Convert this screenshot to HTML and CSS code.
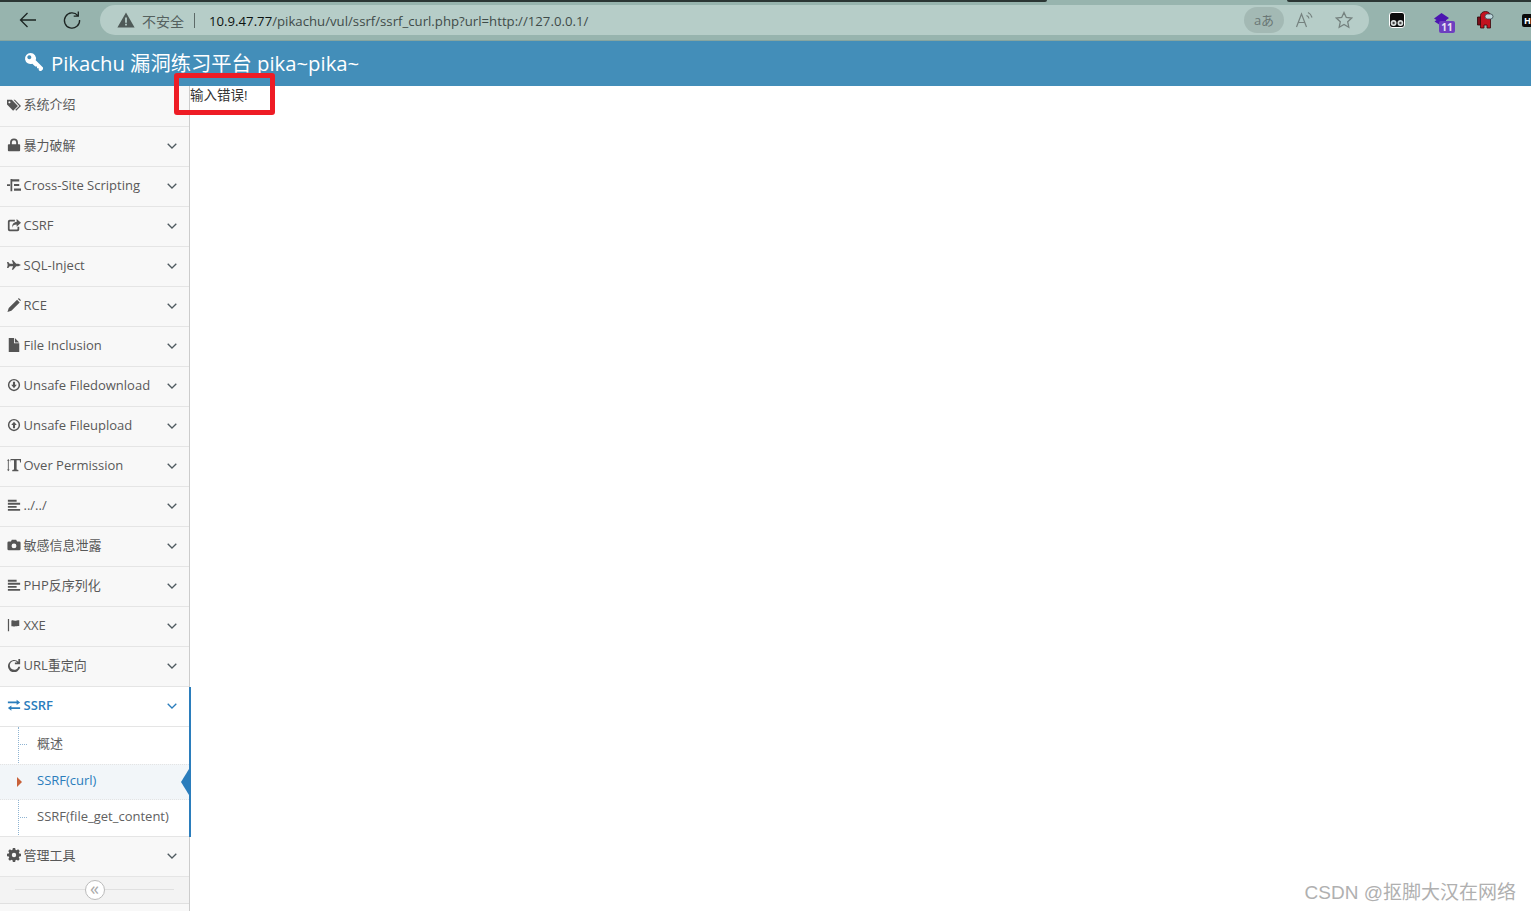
FILE: index.html
```html
<!DOCTYPE html>
<html lang="zh">
<head>
<meta charset="utf-8">
<title>Pikachu</title>
<link rel="stylesheet" href="styles.css">
</head>
<body>
<div class="chrome">
  <div class="tabstrip"><span class="strip-a"></span><span class="strip-b"></span></div>
  <div class="toolbar">
    <svg class="tb-back" width="20" height="20" viewBox="0 0 20 20"><path d="M18 10H2.500M9.500 3l-7 7 7 7" fill="none" stroke="#1c2422" stroke-width="1.300"/></svg>
    <svg class="tb-reload" width="20" height="20" viewBox="0 0 20 20"><path d="M15.800 5.600A7.600 7.600 0 1 0 17.600 10M16.300 1.500v4.600h-4.600" fill="none" stroke="#1c2422" stroke-width="1.300"/></svg>
    <div class="address">
      <svg class="warn" width="18" height="16" viewBox="0 0 18 16"><path fill-rule="evenodd" d="M9 .5l8.600 15H.4zM8.100 5.500v5.200h1.800V5.500zM8.100 11.800v1.800h1.800v-1.800z" fill="#4f5a58"/></svg>
      <span class="unsafe">不安全</span>
      <span class="sep"></span>
      <span class="url"><b>10.9.47.77</b>/pikachu/vul/ssrf/ssrf_curl.php?url=http://127.0.0.1/</span>
      <span class="translate">aあ</span>
      <svg class="read" width="20" height="18" viewBox="0 0 20 18"><path d="M1.500 16L6.500 3l5 13M3.200 11.500h6.600M11.500 4.500a4 4 0 0 1 2.500 3M13 1.500a7.500 7.500 0 0 1 4 5" fill="none" stroke="#75827f" stroke-width="1.200"/></svg>
      <svg class="star" width="18" height="18" viewBox="0 0 18 18"><path d="M9 1.500l2.300 5 5.400.6-4 3.700 1.100 5.400L9 13.500l-4.800 2.700 1.100-5.400-4-3.700 5.400-.6z" fill="none" stroke="#75827f" stroke-width="1.300"/></svg>
    </div>
    <svg class="ext ext-mask" width="16" height="16" viewBox="0 0 16 16"><rect x=".5" y=".5" width="15" height="15" rx="2.500" fill="#0c0c0c" stroke="#fff"/><circle cx="4.600" cy="11" r="2.900" fill="#d9dedd"/><circle cx="11.400" cy="11" r="2.900" fill="#d9dedd"/><circle cx="4.600" cy="11" r="1.200" fill="#444"/><circle cx="11.400" cy="11" r="1.200" fill="#444"/></svg>
    <div class="ext-cap">
      <svg width="17" height="15" viewBox="0 0 17 15"><path d="M8.500 0l7.500 5-3 2.200V10l-4.500 3-7-4.500L3.500 7 1 5.500z" fill="#4b14b0"/></svg>
      <span class="badge">11</span>
    </div>
    <svg class="ext ext-red" width="17" height="18" viewBox="0 0 17 18"><path d="M.5 6h3v8h-3z" fill="#7a0f1a" stroke="#2a0508" stroke-width=".8"/><path d="M3.500 4.500a5 4 0 0 1 10 0V17H10v-3H7v3H3.500z" fill="#c3121f" stroke="#3a070b" stroke-width=".8"/><rect x="8" y="3" width="8" height="5" rx="2.500" fill="#bcd6dc" stroke="#3a4a50" stroke-width=".8"/></svg>
    <div class="ext-last">H</div>
  </div>
</div>

<header class="brand">
  <svg width="20" height="20" viewBox="0 0 20 20"><path fill-rule="evenodd" d="M6.500 1a5.500 5.500 0 0 1 5.200 7.300L19 15.600v1.600l-1.800 1.800h-1.500l-1-1v-1.700h-1.700v-1.700h-1.700L8.300 11.700A5.500 5.500 0 1 1 6.500 1zM5.300 3.200a2 2 0 1 0 .01 0z" fill="#fff"/></svg>
  <span>Pikachu 漏洞练习平台 pika~pika~</span>
</header>

<div class="layout">
  <nav class="sidebar">
    <a class="item item-first">
      <svg class="ico" viewBox="0 0 16 16"><path fill-rule="evenodd" d="M0 2h5.500l7 7-5.500 5.500L0 7.500zM2.800 3.700a1.200 1.200 0 1 0 .01 0zM7.500 2h1.500l7 7-5.500 5.500-1-1L14 9z"/></svg>
      <span class="label">系统介绍</span>
    </a>
    <a class="item">
      <svg class="ico" viewBox="0 0 16 16"><path d="M2 7h1.500V5a4.500 4.500 0 0 1 9 0v2H14a1 1 0 0 1 1 1v6a1 1 0 0 1-1 1H2a1 1 0 0 1-1-1V8a1 1 0 0 1 1-1zm3.500 0h5V5a2.500 2.500 0 0 0-5 0z"/></svg>
      <span class="label">暴力破解</span>
      <svg class="chev" viewBox="0 0 10 6"><path d="M.7.700L5 5l4.300-4.300"/></svg>
    </a>
    <a class="item">
      <svg class="ico" viewBox="0 0 16 16"><path d="M0 7h3.500v2H0zM4 1h2v14H4zM6 1.500h8v2.500H6zM8 6.800h6v2.400H8zM8 12h8v2.500H8z"/></svg>
      <span class="label">Cross-Site Scripting</span>
      <svg class="chev" viewBox="0 0 10 6"><path d="M.7.700L5 5l4.300-4.300"/></svg>
    </a>
    <a class="item">
      <svg class="ico" viewBox="0 0 16 16"><path d="M3 2h6v2H3.500A.5.500 0 0 0 3 4.500v8a.5.500 0 0 0 .5.500h8a.5.500 0 0 0 .5-.5V10h2v3a2 2 0 0 1-2 2H3a2 2 0 0 1-2-2V4a2 2 0 0 1 2-2zm8-1l5 4.500L11 10V7.500C8 7.500 6.500 8.500 6 11c-.3-4 1.500-6.500 5-6.500z"/></svg>
      <span class="label">CSRF</span>
      <svg class="chev" viewBox="0 0 10 6"><path d="M.7.700L5 5l4.300-4.300"/></svg>
    </a>
    <a class="item">
      <svg class="ico" viewBox="0 0 16 16"><path d="M0 4.500h1.500l1.500 2h4L5.500 2.500H7l3.500 4H13L16 8l-3 1.500h-2.500l-3.500 4H5.500L7 9.500H3l-1.500 2H0l.8-3.500z"/></svg>
      <span class="label">SQL-Inject</span>
      <svg class="chev" viewBox="0 0 10 6"><path d="M.7.700L5 5l4.300-4.300"/></svg>
    </a>
    <a class="item">
      <svg class="ico" viewBox="0 0 16 16"><path d="M11.500 2l3 3-9.500 9.500L.5 16 2 11.500zM12.500 1l1-1 2.500 2.500-1 1z"/></svg>
      <span class="label">RCE</span>
      <svg class="chev" viewBox="0 0 10 6"><path d="M.7.700L5 5l4.300-4.300"/></svg>
    </a>
    <a class="item">
      <svg class="ico" viewBox="0 0 16 16"><path d="M2 0h6v6h6v10H2zM9 0l5 5H9z"/></svg>
      <span class="label">File Inclusion</span>
      <svg class="chev" viewBox="0 0 10 6"><path d="M.7.700L5 5l4.300-4.300"/></svg>
    </a>
    <a class="item">
      <svg class="ico" viewBox="0 0 16 16"><path fill-rule="evenodd" d="M8 1a7 7 0 1 1 0 14A7 7 0 0 1 8 1zm0 1.700a5.300 5.300 0 1 0 0 10.600A5.300 5.300 0 0 0 8 2.700zM6.800 4.300h2.400v3.500h2L8 11.600 4.800 7.800h2z"/></svg>
      <span class="label">Unsafe Filedownload</span>
      <svg class="chev" viewBox="0 0 10 6"><path d="M.7.700L5 5l4.300-4.300"/></svg>
    </a>
    <a class="item">
      <svg class="ico" viewBox="0 0 16 16"><path fill-rule="evenodd" d="M8 1a7 7 0 1 1 0 14A7 7 0 0 1 8 1zm0 1.700a5.300 5.300 0 1 0 0 10.600A5.300 5.300 0 0 0 8 2.700zM8 4.300l3.200 3.800h-2v3.500H6.800V8.100h-2z"/></svg>
      <span class="label">Unsafe Fileupload</span>
      <svg class="chev" viewBox="0 0 10 6"><path d="M.7.700L5 5l4.300-4.300"/></svg>
    </a>
    <a class="item">
      <svg class="ico" viewBox="0 0 16 16"><path d="M0 3L1.500 1 3 3H2v10h1l-1.500 2L0 13h1V3zM4 1h12v4h-1l-.5-2.500h-3.500V13l2 .7V15H6v-1.300l2-.7V2.500H4.500L4 5z"/></svg>
      <span class="label">Over Permission</span>
      <svg class="chev" viewBox="0 0 10 6"><path d="M.7.700L5 5l4.300-4.300"/></svg>
    </a>
    <a class="item">
      <svg class="ico" viewBox="0 0 16 16"><path d="M1 2h10v2.200H1zM1 5.500h14v2.200H1zM1 9h10v2.200H1zM1 12.500h14v2.200H1z"/></svg>
      <span class="label">../../</span>
      <svg class="chev" viewBox="0 0 10 6"><path d="M.7.700L5 5l4.300-4.300"/></svg>
    </a>
    <a class="item">
      <svg class="ico" viewBox="0 0 16 16"><path fill-rule="evenodd" d="M2 4h2.500L5.500 2h5l1 2H14a1.500 1.500 0 0 1 1.500 1.500v7A1.500 1.500 0 0 1 14 14H2a1.500 1.500 0 0 1-1.500-1.500v-7A1.500 1.500 0 0 1 2 4zm6 2.200a2.800 2.800 0 1 0 0 5.600 2.800 2.800 0 0 0 0-5.600z"/></svg>
      <span class="label">敏感信息泄露</span>
      <svg class="chev" viewBox="0 0 10 6"><path d="M.7.700L5 5l4.300-4.300"/></svg>
    </a>
    <a class="item">
      <svg class="ico" viewBox="0 0 16 16"><path d="M1 2h10v2.200H1zM1 5.500h14v2.200H1zM1 9h10v2.200H1zM1 12.500h14v2.200H1z"/></svg>
      <span class="label">PHP反序列化</span>
      <svg class="chev" viewBox="0 0 10 6"><path d="M.7.700L5 5l4.300-4.300"/></svg>
    </a>
    <a class="item">
      <svg class="ico" viewBox="0 0 16 16"><path d="M1 1h1.400v14H1zM5 3c2-1 3 .5 5 0s3-.5 4-.5V9c-1 0-2 0-4 .5S7 9 5 9.500z"/></svg>
      <span class="label">XXE</span>
      <svg class="chev" viewBox="0 0 10 6"><path d="M.7.700L5 5l4.300-4.300"/></svg>
    </a>
    <a class="item">
      <svg class="ico" viewBox="0 0 16 16"><path d="M13 4.200V1l2 .1v6h-6V5h2.800A5 5 0 1 0 13 10h2.100A7 7 0 1 1 13 4.200z"/></svg>
      <span class="label">URL重定向</span>
      <svg class="chev" viewBox="0 0 10 6"><path d="M.7.700L5 5l4.300-4.300"/></svg>
    </a>
    <section class="group">
      <a class="item item-open">
        <svg class="ico" viewBox="0 0 16 16"><path d="M1 4h10V2l4 3-4 3V6H1zM15 10.500H5v-2l-4 3 4 3v-2h10z"/></svg>
        <span class="label">SSRF</span>
        <svg class="chev" viewBox="0 0 10 6"><path d="M.7.700L5 5l4.300-4.300"/></svg>
      </a>
      <ul class="sub">
        <li class="sub-item sub-first">概述</li>
        <li class="sub-item sub-active">SSRF(curl)</li>
        <li class="sub-item">SSRF(file_get_content)</li>
      </ul>
    </section>
    <a class="item">
      <svg class="ico" viewBox="0 0 16 16"><path fill-rule="evenodd" d="M6.700 0h2.600l.4 2 1.300.5 1.700-1.100 1.900 1.900-1.100 1.700.5 1.300 2 .4v2.600l-2 .4-.5 1.300 1.100 1.700-1.900 1.900-1.700-1.100-1.300.5-.4 2H6.700l-.4-2-1.300-.5-1.700 1.100-1.900-1.900 1.100-1.700-.5-1.300-2-.4V6.700l2-.4.500-1.300-1.100-1.700 1.900-1.900L5 2.500 6.300 2zM8 5.500a2.500 2.500 0 1 0 0 5 2.500 2.500 0 0 0 0-5z"/></svg>
      <span class="label">管理工具</span>
      <svg class="chev" viewBox="0 0 10 6"><path d="M.7.700L5 5l4.300-4.300"/></svg>
    </a>
    <div class="collapse">
      <span class="collapse-btn">«</span>
    </div>
  </nav>
  <main class="content">输入错误!</main>
</div>

<div class="marker"></div>
<div class="watermark">CSDN @抠脚大汉在网络</div>
</body>
</html>
```

FILE: styles.css
```css
* { box-sizing: border-box; }
html, body { margin: 0; padding: 0; height: 911px; overflow: hidden; background: #fff; }
body { font-family: "Open Sans", "Noto Sans CJK SC", sans-serif; position: relative; }

.chrome { height: 41px; background: #97b4ae; border-bottom: 1px solid #86a5a0; }
.tabstrip { height: 3px; display: flex; justify-content: space-between; }
.strip-a { width: 1047px; height: 2px; background: #2b3634; border-bottom-right-radius: 2px; }
.strip-b { width: 244px; height: 2px; background: #2b3634; border-bottom-left-radius: 2px; }
.toolbar { display: flex; align-items: center; height: 34px; padding-left: 18px; }
.tb-back { margin-right: 24px; flex: none; }
.tb-reload { margin-right: 18px; flex: none; }
.address { width: 1269px; height: 30px; border-radius: 15px; background: #b6cdc8; display: flex; align-items: center; padding-left: 17px; flex: none; }
.unsafe { font-size: 14px; color: #55615f; margin-left: 7px; margin-top: 2px; }
.sep { width: 1px; height: 15px; background: #5d6a68; margin: 0 14px 0 10px; }
.url { font-family: "Open Sans", sans-serif; font-size: 13.200px; color: #3f4b49; flex: 1; margin-top: 2px; }
.url b { font-weight: 400; color: #0c1211; }
.translate { width: 40px; height: 26px; border-radius: 13px; background: #a3b9b4; font-size: 13px; color: #6a7775; display: flex; align-items: center; justify-content: center; margin-right: 11px; padding-bottom: 2px; }
.read { margin-right: 20px; }
.star { margin-right: 16px; }
.ext { flex: none; }
.ext-mask { margin-left: 20px; }
.ext-cap { position: relative; width: 17px; height: 17px; margin-left: 28px; margin-top: -2px; }
.badge { position: absolute; left: 6px; top: 10px; width: 16px; height: 12px; background: #6d3fc0; color: #e8e4f4; border-radius: 2px; font-size: 10px; font-weight: 700; line-height: 12px; text-align: center; }
.ext-red { margin-left: 27px; }
.ext-last { width: 16px; height: 13px; background: #0a0a0a; color: #fff; font-size: 9px; font-weight: 700; line-height: 13px; padding-left: 2px; border-radius: 2px; margin-left: 28px; flex: none; }

.brand { height: 45px; background: #438eb9; color: #fff; display: flex; align-items: center; padding: 0 0 4px 24px; gap: 7px; font-size: 20.300px; }

.layout { display: flex; height: 825px; }
.sidebar { width: 190px; flex: none; background: #f8f8f8; border-right: 1px solid #ccc; display: flex; flex-direction: column; }
.item { height: 40px; display: flex; align-items: center; padding: 0 0 4px 7px; border-bottom: 1px solid #e5e5e5; color: #585858; font-size: 13px; flex: none; }
.item-first { height: 41px; }
.ico { width: 14px; height: 14px; fill: #555; flex: none; margin-right: 2.500px; margin-top: 1px; }
.label { flex: 1; white-space: nowrap; line-height: 18px; }
.chev { width: 10px; height: 6px; fill: none; stroke: #4f5a60; stroke-width: 1.300; margin: 2px 12px 0 0; flex: none; }

.group { border-right: 2px solid #2b7dbc; margin-right: -2px; background: #fff; flex: none; }
.item-open { color: #2b7dbc; font-weight: 600; background: #fff; }
.item-open .ico { fill: #2b7dbc; }
.item-open .chev { stroke: #2b7dbc; }
.sub { list-style: none; margin: 0; padding: 0; position: relative; }
.sub::before { content: ""; position: absolute; left: 18px; top: 0; bottom: 0; border-left: 1px dotted #8fb4d2; }
.sub-item { height: 37px; display: flex; align-items: center; padding: 0 0 5px 37px; font-size: 13px; color: #616161; position: relative; white-space: nowrap; }
.sub-first { padding-bottom: 7px; }
.sub-item::before { content: ""; position: absolute; left: 20px; top: 46%; width: 7px; border-top: 1px dotted #8fb4d2; }
.sub-active { height: 36px; background: #f2f6f9; color: #2b7dbc; border-top: 1px dotted #e4e4e4; border-bottom: 1px dotted #e4e4e4; }
.sub-active::before { left: 17px; top: 50%; margin-top: -5px; width: 0; border-top: 5px solid transparent; border-bottom: 5px solid transparent; border-left: 5px solid #c86139; }
.sub-active::after { content: ""; position: absolute; right: 0; top: 50%; margin-top: -13px; border-top: 13px solid transparent; border-bottom: 13px solid transparent; border-right: 8px solid #2b7dbc; }
.sub-item:last-child { border-bottom: 1px solid #e5e5e5; }

.collapse { height: 27px; background: #f3f3f3; border-bottom: 1px solid #e0e0e0; display: flex; align-items: center; justify-content: center; position: relative; flex: none; }
.collapse::before { content: ""; position: absolute; left: 15px; right: 15px; top: 12px; border-top: 1px solid #e0e0e0; }
.collapse-btn { width: 20px; height: 20px; border-radius: 50%; background: #fff; border: 1px solid #bbb; color: #aaa; font-size: 18px; line-height: 15px; text-align: center; position: relative; }

.content { flex: 1; font-size: 13.500px; color: #333; line-height: 18px; height: 18px; }

.marker { position: absolute; left: 174px; top: 73px; width: 101px; height: 42px; border: 5px solid #ee1c25; border-radius: 3px; }
.watermark { position: absolute; right: 15px; top: 881px; font-family: "Liberation Sans", "Noto Sans CJK SC", sans-serif; font-size: 19px; color: #b0b0b0; line-height: 24px; }
```
